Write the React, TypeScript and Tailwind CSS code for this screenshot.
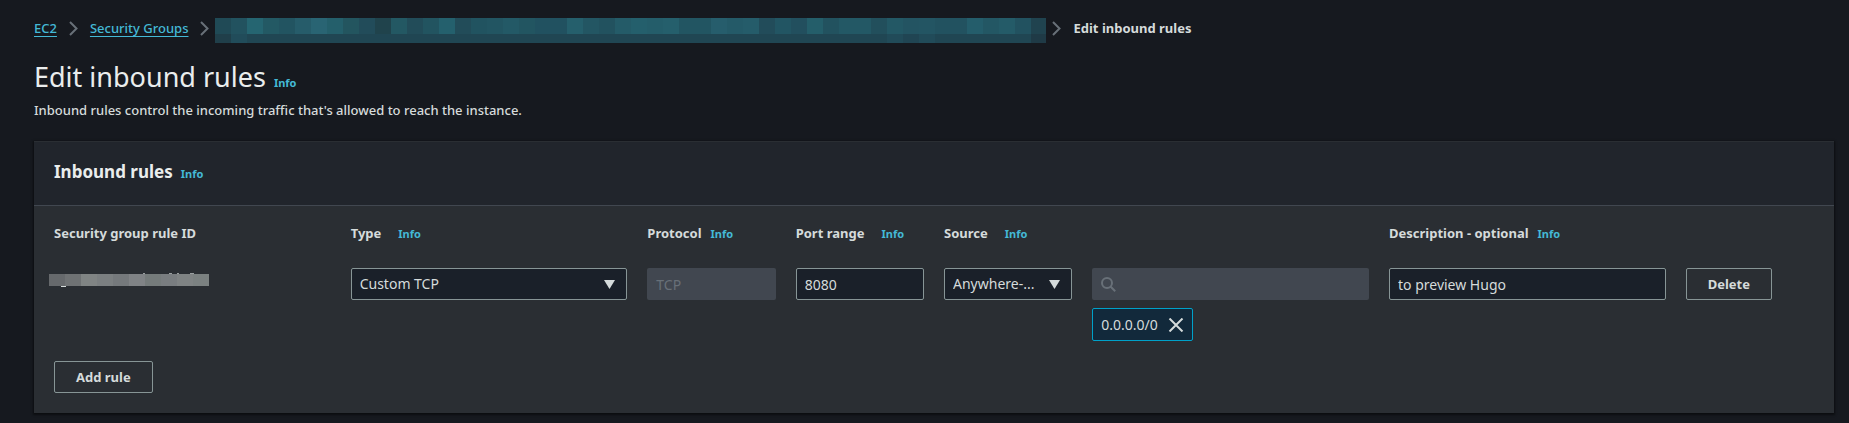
import { useId, type ReactNode } from "react";

const MASK_TOP = [
  "#204a56", "#22525f", "#256571", "#235964", "#225461", "#265c6a", "#296473", "#245f6b", "#23555f",
  "#224c5a", "#20434c", "#235863", "#224c59", "#225460", "#24606d", "#224c59", "#215360", "#225562",
  "#235966", "#225561", "#215160", "#215160", "#255f6c", "#235663", "#22525f", "#245b68", "#245f6c",
  "#245d6a", "#255f6c", "#225562", "#225562", "#265d6c", "#245a68", "#255c6a", "#224c5a", "#225563",
  "#224f5e", "#245e6a", "#22525f", "#235865", "#235865", "#224f5c", "#235865", "#235462", "#235563",
  "#225260", "#225260", "#245d6b", "#235764", "#245b68", "#225260", "#20434f",
];

const MASK_BOTTOM: Record<number, string> = {
  0: "#203f4a",
  1: "#214c5a",
  42: "#214b59",
  43: "#204553",
  44: "#214b59",
  51: "#1f3a46",
};

const ID_MASK = [
  "#66696c", "#6f7274", "#808484", "#7b7f81", "#75797c", "#808386", "#757b7b", "#797d80", "#7f8384", "#7b8181",
];

function MaskedGroup() {
  return (
    <svg width="831" height="25" viewBox="0 0 831 25" shapeRendering="crispEdges" className="-mx-1.5 shrink-0" aria-hidden="true">
      {MASK_TOP.map((fill, i) => (
        <g key={i}>
          <rect x={i * 16} y="0" width="16" height="16" fill={fill} />
          <rect x={i * 16} y="16" width="16" height="9" fill={MASK_BOTTOM[i] ?? "#204653"} />
        </g>
      ))}
    </svg>
  );
}

function MaskedId() {
  return (
    <svg width="160" height="14" viewBox="0 0 160 14" shapeRendering="crispEdges" className="mt-[5px] -ml-[5px]" aria-hidden="true">
      {ID_MASK.map((fill, i) => (
        <rect key={i} x={i * 16} y="1" width="16" height="12" fill={fill} />
      ))}
      <g fill="#9a9fa0">
        <rect x="94" y="0" width="2" height="1" />
        <rect x="120" y="0" width="3" height="1" />
        <rect x="128" y="0" width="2" height="1" />
        <rect x="141" y="0" width="4" height="1" />
      </g>
      <rect x="12" y="13" width="5" height="1" fill="#d5dbdb" />
    </svg>
  );
}

function Separator() {
  return (
    <svg width="9" height="15" viewBox="0 0 9 15" fill="none" stroke="#687078" strokeWidth="2" className="mt-[3px] shrink-0" aria-hidden="true">
      <path d="M1 1l6.5 6.5L1 14" />
    </svg>
  );
}

function Crumb({ children }: { children: ReactNode }) {
  return (
    <a href="#" className="font-medium text-[#44b9d6] underline underline-offset-3 [text-decoration-skip-ink:none]">
      {children}
    </a>
  );
}

function Info() {
  return (
    <a href="#" className="text-[11px] font-bold text-[#44b9d6]">
      Info
    </a>
  );
}

function Heading({ id, text, wide = false, className }: { id: string; text: string; wide?: boolean; className: string }) {
  return (
    <div className={`flex items-baseline whitespace-nowrap leading-5 ${wide ? "gap-[17px]" : "gap-[9px]"} ${className}`}>
      <label htmlFor={id} className="font-bold">
        {text}
      </label>
      <Info />
    </div>
  );
}

const field =
  "block h-8 w-full rounded-xs border border-[#879596] bg-[#1a2029] px-2 text-sm text-[#d5dbdb] outline-none focus:border-[#00a1c9]";
const disabledField = "block h-8 w-full rounded-xs bg-[#414750] text-sm placeholder:text-[#687078] outline-none";
const button = "h-8 rounded-xs border border-[#879596] px-[21px] font-bold hover:bg-[#21252c]";

function Select({ id, value }: { id: string; value: string }) {
  return (
    <div className="relative">
      <select id={id} className={`${field} appearance-none`}>
        <option>{value}</option>
      </select>
      <svg width="11" height="9" viewBox="0 0 11 9" fill="#d5dbdb" className="pointer-events-none absolute top-3 right-3" aria-hidden="true">
        <path d="M0 0h11L5.5 9z" />
      </svg>
    </div>
  );
}

export default function App() {
  const id = useId();
  return (
    <main className="min-h-screen bg-[#16191f] pt-[18px] pr-[15px] pb-2.5 pl-[34px] font-['Noto_Sans','Open_Sans',sans-serif] text-[13px] leading-5 text-[#d5dbdb]">
      <nav aria-label="Breadcrumbs" className="flex items-start gap-3 whitespace-nowrap">
        <Crumb>EC2</Crumb>
        <Separator />
        <Crumb>Security Groups</Crumb>
        <Separator />
        <MaskedGroup />
        <Separator />
        <span className="font-bold">Edit inbound rules</span>
      </nav>

      <header className="mt-4">
        <div className="flex items-baseline gap-2">
          <h1 className="text-[27px] leading-9 text-[#eaeded]">Edit inbound rules</h1>
          <Info />
        </div>
        <p className="mt-[5px] font-medium">Inbound rules control the incoming traffic that's allowed to reach the instance.</p>
      </header>

      <section className="mt-[21px] border-t border-[#2a2e33] bg-[#2a2e33] shadow-[0_1px_2px_1px_rgba(0,0,0,0.5)]">
        <div className="flex h-16 items-baseline gap-2 border-b border-[#414750] bg-[#21252c] px-5 pt-[18px]">
          <h2 className="text-[17px] leading-6 font-bold text-[#eaeded]">Inbound rules</h2>
          <Info />
        </div>

        <form className="px-5 pt-[17px] pb-5" onSubmit={(e) => e.preventDefault()}>
          <div className="grid grid-cols-12 gap-x-5">
            <div className="col-span-2 font-bold">Security group rule ID</div>
            <Heading id={`${id}-type`} text="Type" wide className="col-span-2" />
            <Heading id={`${id}-protocol`} text="Protocol" className="col-span-1" />
            <Heading id={`${id}-port`} text="Port range" wide className="col-span-1" />
            <Heading id={`${id}-source`} text="Source" wide className="col-span-3" />
            <Heading id={`${id}-description`} text="Description - optional" className="col-span-3" />
          </div>

          <div className="mt-6 grid grid-cols-12 items-start gap-x-5">
            <div className="col-span-2">
              <MaskedId />
            </div>
            <div className="col-span-2">
              <Select id={`${id}-type`} value="Custom TCP" />
            </div>
            <input id={`${id}-protocol`} placeholder="TCP" disabled className={`${disabledField} px-[9px]`} />
            <input id={`${id}-port`} defaultValue="8080" className={field} />
            <Select id={`${id}-source`} value="Anywhere-..." />
            <div className="col-span-2">
              <div className="relative">
                <input aria-label="Source address" disabled className={`${disabledField} pr-2 pl-8`} />
                <svg width="15" height="15" viewBox="0 0 15 15" fill="none" stroke="#687078" strokeWidth="2" className="absolute top-[9px] left-[9px]" aria-hidden="true">
                  <circle cx="6" cy="6" r="5" />
                  <path d="M9.5 9.5l4.7 4.7" />
                </svg>
              </div>
              <div className="mt-2 inline-flex h-[33px] items-center gap-2.5 rounded-xs border border-[#00a1c9] bg-[#12293b] px-2 align-top text-sm">
                <span>0.0.0.0/0</span>
                <button type="button" aria-label="Remove 0.0.0.0/0">
                  <svg width="16" height="14" viewBox="0 0 16 14" fill="none" stroke="#d5dbdb" strokeWidth="2" aria-hidden="true">
                    <path d="M1.5 0.5l13 13M14.5 0.5l-13 13" />
                  </svg>
                </button>
              </div>
            </div>
            <input id={`${id}-description`} defaultValue="to preview Hugo" className={`${field} col-span-2`} />
            <button type="button" className={`${button} justify-self-start`}>
              Delete
            </button>
          </div>

          <button type="button" className={`${button} mt-5`}>
            Add rule
          </button>
        </form>
      </section>
    </main>
  );
}
